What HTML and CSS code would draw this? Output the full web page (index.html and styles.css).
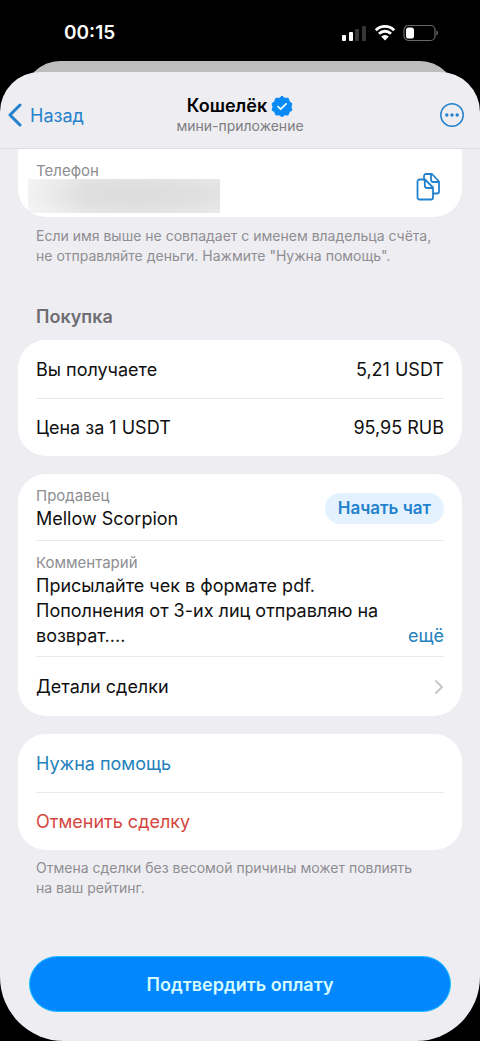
FILE: index.html
```html
<!DOCTYPE html>
<html lang="ru">
<head>
<meta charset="utf-8">
<meta name="viewport" content="width=device-width, initial-scale=1">
<title>Кошелёк</title>
<link rel="stylesheet" href="styles.css">
</head>
<body>
<div class="status">
  <time class="clock">00:15</time>
  <div class="indicators">
    <svg width="26" height="18" viewBox="0 0 26 18" aria-hidden="true">
      <rect x="1" y="11" width="4" height="6" rx="1" fill="#fff"/>
      <rect x="8" y="8" width="4" height="9" rx="1" fill="#fff"/>
      <rect x="14" y="5" width="4" height="12" rx="1" fill="#363636"/>
      <rect x="21" y="2" width="4" height="15" rx="1" fill="#363636"/>
    </svg>
    <svg width="22" height="18" viewBox="0 0 22 18" aria-hidden="true">
      <path d="M1.8 6.2a13.2 13.2 0 0 1 18.4 0M5 9.7a8.6 8.6 0 0 1 12 0" fill="none" stroke="#fff" stroke-width="2.8"/>
      <path d="M7.2 12.6a5.4 5.4 0 0 1 7.6 0L11 16.4z" fill="#fff"/>
    </svg>
    <svg width="36" height="18" viewBox="0 0 36 18" aria-hidden="true">
      <rect x="1" y="1.5" width="31" height="15" rx="4.5" fill="none" stroke="#686868" stroke-width="1.2"/>
      <rect x="3" y="3.5" width="8" height="11" rx="2.6" fill="#fff"/>
      <path d="M33.4 6.5v5c2-.6 2-4.4 0-5z" fill="#686868"/>
    </svg>
  </div>
</div>
<div class="sheet-behind"></div>
<div class="sheet">
  <header class="header">
    <a class="back" href="#back">
      <svg width="14" height="24" viewBox="0 0 14 24" aria-hidden="true"><path d="M12 2 2 12l10 10" fill="none" stroke="currentColor" stroke-width="3" stroke-linecap="round" stroke-linejoin="round"/></svg>
      Назад
    </a>
    <div class="heading">
      <h1 class="title">Кошелёк
        <svg width="22" height="22" viewBox="0 0 22 22" aria-hidden="true">
          <path d="M11 1.200 13.700 3.300 17.200 3.200 18.300 6.500 21 8.700 19.900 12 21 15 18.200 17 17.100 20 13.600 19.900 11 21.800 8.400 19.900 4.900 20 3.800 17 1 15 2.100 12 1 8.700 3.700 6.500 4.800 3.200 8.300 3.300z" fill="#0a8af5" stroke="#0a8af5" stroke-linejoin="round"/>
          <path d="m7 11.600 2.700 2.600 5.400-5.400" fill="none" stroke="#e8ffff" stroke-width="1.800" stroke-linecap="round" stroke-linejoin="round"/>
        </svg>
      </h1>
      <p class="subtitle">мини-приложение</p>
    </div>
    <button class="icon-button" type="button" aria-label="Меню">
      <svg width="24" height="24" viewBox="0 0 24 24"><circle cx="12" cy="12" r="11.200" fill="none" stroke="currentColor" stroke-width="1.500"/><g fill="currentColor"><circle cx="6.800" cy="12" r="1.700"/><circle cx="12" cy="12" r="1.700"/><circle cx="17.200" cy="12" r="1.700"/></g></svg>
    </button>
  </header>
  <main class="content">
    <section class="card card-cut">
      <div class="phone">
        <div>
          <p class="label">Телефон</p>
          <div class="hidden-number"></div>
        </div>
        <button class="icon-button" type="button" aria-label="Скопировать">
          <svg width="24" height="28" viewBox="0 0 24 28" fill="none" stroke="currentColor" stroke-width="1.800" stroke-linejoin="round" stroke-linecap="round">
            <path d="M8 6.500V3a2 2 0 0 1 2-2h6l7 7.500v10a2 2 0 0 1-2 2h-3.500M15 1v5.500q0 2.500 2.500 2.500H23"/>
            <path d="M3.500 6.500H9l8 8V24.500a2 2 0 0 1-2 2H3.500a2 2 0 0 1-2-2v-16a2 2 0 0 1 2-2zM8.800 6.500v6q0 2.500 2.500 2.500H17"/>
          </svg>
        </button>
      </div>
    </section>
    <p class="note">Если имя выше не совпадает с именем владельца счёта, не отправляйте деньги. Нажмите "Нужна помощь".</p>

    <h2 class="section-title">Покупка</h2>
    <dl class="card">
      <div class="row"><dt>Вы получаете</dt><dd>5,21 USDT</dd></div>
      <div class="row"><dt>Цена за 1 USDT</dt><dd>95,95 RUB</dd></div>
    </dl>

    <section class="card">
      <div class="row row-seller">
        <div>
          <p class="label">Продавец</p>
          <p>Mellow Scorpion</p>
        </div>
        <button class="chat" type="button">Начать чат</button>
      </div>
      <div class="row row-comment">
        <div>
          <p class="label">Комментарий</p>
          <p>Присылайте чек в формате pdf. Пополнения от 3-их лиц отправляю на возврат....</p>
        </div>
        <a class="more" href="#comment">ещё</a>
      </div>
      <a class="row row-details" href="#details">Детали сделки
        <svg width="10" height="16" viewBox="0 0 10 16" aria-hidden="true"><path d="m2 2 6 6-6 6" fill="none" stroke="#c8c8cb" stroke-width="2" stroke-linecap="round" stroke-linejoin="round"/></svg>
      </a>
    </section>

    <section class="card card-noted">
      <button class="row accent" type="button">Нужна помощь</button>
      <button class="row danger" type="button">Отменить сделку</button>
    </section>
    <p class="note">Отмена сделки без весомой причины может повлиять на&nbsp;ваш рейтинг.</p>
  </main>
  <footer class="footer">
    <button class="confirm" type="button">Подтвердить оплату</button>
  </footer>
</div>
</body>
</html>
```
FILE: styles.css
```css
* {
  box-sizing: border-box;
}

body,
h1,
h2,
p,
dl,
dd {
  margin: 0;
}

body {
  display: flex;
  flex-direction: column;
  min-height: 100vh;
  background: #000;
  color: #101010;
  font-family: Inter, "Noto Sans", sans-serif;
  font-size: 18px;
  line-height: 25px;
}

button {
  padding: 0;
  border: 0;
  background: none;
  color: inherit;
  font: inherit;
  text-align: left;
}

a {
  color: inherit;
  text-decoration: none;
}

svg {
  display: block;
  flex: none;
}

.status {
  display: flex;
  justify-content: space-between;
  align-items: center;
  height: 61px;
  padding: 4px 41px 0 64px;
  color: #fff;
}

.clock {
  font-weight: 600;
  font-size: 19px;
}

.indicators {
  display: flex;
  gap: 7px;
}

.sheet-behind {
  height: 40px;
  margin: 0 24px -29px;
  border-radius: 36px 36px 0 0;
  background: #bdbdbe;
}

.sheet {
  display: flex;
  flex: 1;
  flex-direction: column;
  overflow: hidden;
  border-radius: 40px 40px 64px 64px;
  background: #eeedf2;
  z-index: 1;
}

.header {
  display: grid;
  grid-template-columns: 1fr auto 1fr;
  align-items: center;
  height: 77px;
  padding: 10px 16px 0;
  border-bottom: 1px solid #dddde1;
}

.back {
  display: flex;
  align-items: center;
  gap: 8px;
  margin-left: -8px;
  color: #2481cc;
}

.heading {
  text-align: center;
}

.title {
  display: flex;
  justify-content: center;
  align-items: center;
  gap: 4px;
  color: #000;
  font-weight: 600;
  font-size: 18px;
  line-height: 22px;
}

.subtitle {
  color: #7d7d82;
  font-size: 14px;
  line-height: 18px;
}

.icon-button {
  justify-self: end;
  color: #2481cc;
}

.content {
  padding: 0 18px;
}

.card {
  margin-bottom: 18px;
  padding: 0 18px;
  border-radius: 28px;
  background: #fff;
}

.card-cut {
  margin-bottom: 9px;
  border-radius: 0 0 28px 28px;
}

.card-noted {
  margin-bottom: 8px;
}

.phone {
  display: flex;
  justify-content: space-between;
  align-items: center;
  height: 68px;
  padding: 8px 4px 0 0;
}

.hidden-number {
  width: 192px;
  height: 34px;
  margin: -2px 0 0 -8px;
  background: radial-gradient(ellipse at 55% 45%, #dcdcdc 0, #e0e0e0 45%, #ebebeb 100%);
  mask-image: linear-gradient(90deg, rgb(0 0 0 / 50%), #000 30%);
}

.label {
  color: #8e8e92;
  font-size: 15px;
  line-height: 20px;
}

.note {
  padding: 0 18px;
  color: #8e8e93;
  font-size: 14px;
  line-height: 20px;
}

.section-title {
  margin: 38px 18px 11px;
  color: #6d6d72;
  font-weight: 600;
  font-size: 18px;
}

.row {
  display: flex;
  justify-content: space-between;
  align-items: center;
  width: 100%;
  height: 58px;
}

.row + .row {
  border-top: 1px solid #e9e9eb;
}

.row-seller {
  height: 66px;
  padding-top: 2px;
}

.row.row-comment {
  align-items: end;
  height: auto;
  padding: 12px 0 8px;
}

.row.row-details {
  height: 60px;
}

.chat {
  padding: 3px 13px;
  border-radius: 16px;
  background: #e3f2fe;
  color: #2481cc;
  font-weight: 600;
  font-size: 17px;
}

.more,
.accent {
  color: #2481bc;
}

.danger {
  color: #d64640;
}

.footer {
  margin-top: auto;
  padding: 0 29px 29px;
}

.confirm {
  width: 100%;
  height: 56px;
  border: 1px solid #22c2ff;
  border-radius: 28px;
  background: #0287ff;
  color: #d5fbff;
  font-weight: 600;
  text-align: center;
}
```
